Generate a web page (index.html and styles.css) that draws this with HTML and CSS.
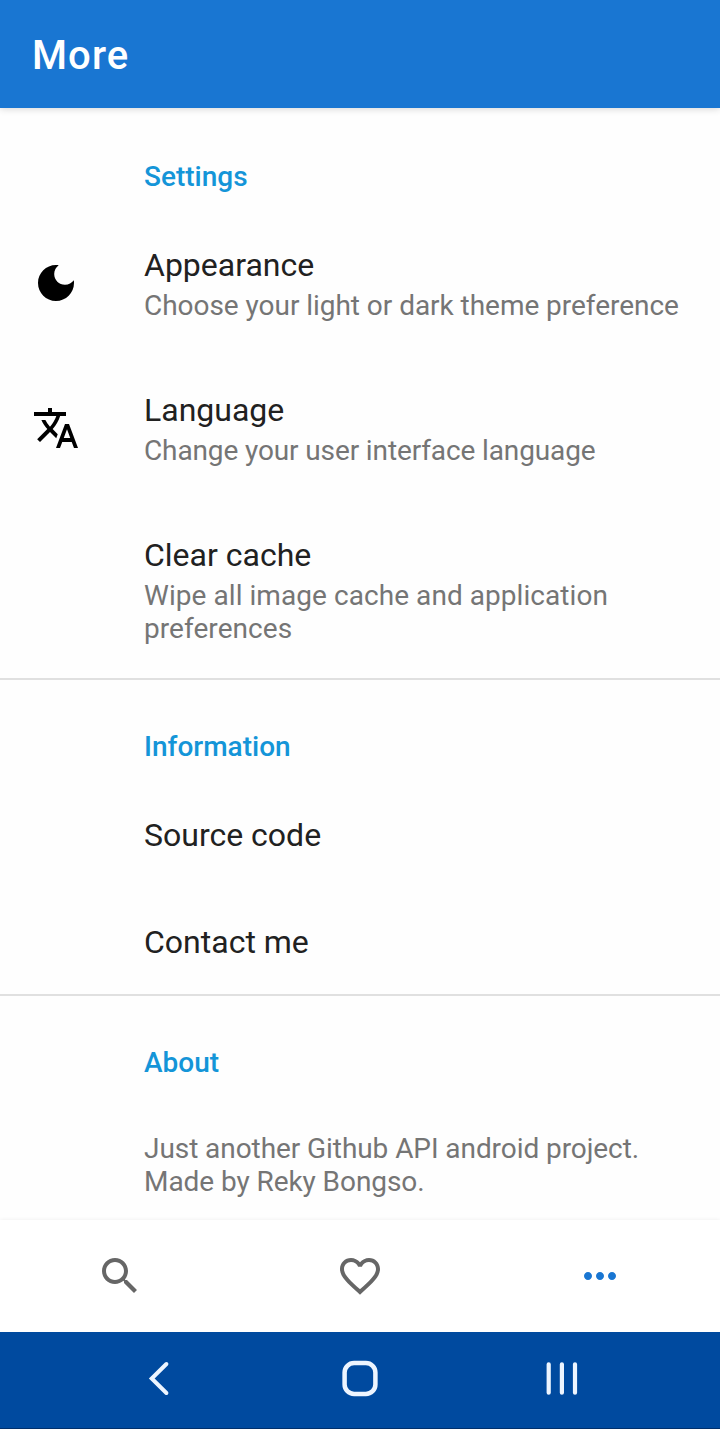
FILE: index.html
```html
<!DOCTYPE html>
<html lang="en">
<head>
<meta charset="utf-8">
<title>More</title>
<link rel="stylesheet" href="styles.css">
</head>
<body>
<div class="screen">
  <header class="app-bar"><h1 class="app-title">More</h1></header>
  <main class="content">
    <section class="group">
      <h2 class="group-title">Settings</h2>
      <div class="item appearance">
        <svg class="item-icon" viewBox="0 0 24 24"><path d="M12 3c-4.97 0-9 4.03-9 9s4.03 9 9 9 9-4.03 9-9c0-.46-.04-.92-.1-1.36-.98 1.37-2.58 2.26-4.4 2.26-2.98 0-5.4-2.42-5.4-5.4 0-1.81.89-3.42 2.26-4.4-.44-.06-.9-.1-1.36-.1z"/></svg>
        <div class="item-text"><div class="item-title">Appearance</div><div class="item-summary">Choose your light or dark theme preference</div></div>
      </div>
      <div class="item language">
        <svg class="item-icon" viewBox="0 0 24 24"><path d="M12.87 15.07l-2.54-2.51.03-.03c1.74-1.94 2.98-4.17 3.71-6.53H17V4h-7V2H8v2H1v1.99h11.17C11.5 7.92 10.44 9.75 9 11.35 8.07 10.32 7.3 9.19 6.69 8h-2c.73 1.63 1.73 3.17 2.98 4.56l-5.09 5.02L4 19l5-5 3.11 3.11.76-2.04zM18.5 10h-2L12 22h2l1.12-3h4.75L21 22h2l-4.5-12zm-2.62 7l1.62-4.33L19.12 17h-3.24z"/></svg>
        <div class="item-text"><div class="item-title">Language</div><div class="item-summary">Change your user interface language</div></div>
      </div>
      <div class="item cache">
        <div class="item-text"><div class="item-title">Clear cache</div><div class="item-summary">Wipe all image cache and application preferences</div></div>
      </div>
    </section>
    <section class="group divided">
      <h2 class="group-title">Information</h2>
      <div class="item"><div class="item-text"><div class="item-title">Source code</div></div></div>
      <div class="item"><div class="item-text"><div class="item-title">Contact me</div></div></div>
    </section>
    <section class="group divided">
      <h2 class="group-title">About</h2>
      <div class="item about"><div class="item-text"><div class="item-summary">Just another Github API android project.<br>Made by Reky Bongso.</div></div></div>
    </section>
  </main>
  <nav class="tabs">
    <svg class="tab" viewBox="0 0 24 24"><path d="M15.5 14h-.79l-.28-.27C15.41 12.59 16 11.11 16 9.5 16 5.91 13.09 3 9.5 3S3 5.91 3 9.5 5.91 16 9.5 16c1.61 0 3.09-.59 4.23-1.57l.27.28v.79l5 4.99L20.49 19l-4.99-5zm-6 0C7.01 14 5 11.99 5 9.5S7.01 5 9.5 5 14 7.01 14 9.5 11.99 14 9.5 14z"/></svg>
    <svg class="tab" viewBox="0 0 24 24"><path d="M16.5 3c-1.74 0-3.41.81-4.5 2.09C10.91 3.81 9.24 3 7.5 3 4.42 3 2 5.42 2 8.5c0 3.78 3.4 6.86 8.55 11.54L12 21.35l1.45-1.32C18.6 15.36 22 12.28 22 8.5 22 5.42 19.58 3 16.5 3zm-4.4 15.55l-.1.1-.1-.1C7.14 14.24 4 11.39 4 8.5 4 6.5 5.5 5 7.5 5c1.54 0 3.04.99 3.57 2.36h1.87C13.46 5.99 14.96 5 16.5 5c2 0 3.5 1.5 3.5 3.5 0 2.89-3.14 5.74-7.9 10.05z"/></svg>
    <svg class="tab active" viewBox="0 0 24 24"><path d="M6 10c-1.1 0-2 .9-2 2s.9 2 2 2 2-.9 2-2-.9-2-2-2zm12 0c-1.1 0-2 .9-2 2s.9 2 2 2 2-.9 2-2-.9-2-2-2zm-6 0c-1.1 0-2 .9-2 2s.9 2 2 2 2-.9 2-2-.9-2-2-2z"/></svg>
  </nav>
  <footer class="system-bar">
    <svg class="system-icon" viewBox="0 0 40 40"><path d="M27.4 6 12.7 20.5 27.4 35" stroke-width="4"/></svg>
    <svg class="system-icon" viewBox="0 0 40 40"><rect x="4.6" y="5.1" width="30.8" height="30.8" rx="9.5" stroke-width="4.5"/></svg>
    <svg class="system-icon" viewBox="0 0 40 40"><path d="M7.7 6.3v28.4M20.9 6.3v28.4M34 6.3v28.4" stroke-width="4.2"/></svg>
  </footer>
</div>
</body>
</html>
```
FILE: styles.css
```css
* { box-sizing: border-box; margin: 0; }
body { background: #fefefe; font-family: Roboto, sans-serif; }
.screen { width: 720px; height: 1429px; display: flex; flex-direction: column; overflow: hidden; }
.app-bar { z-index: 1; height: 108px; flex: none; display: flex; align-items: center; padding: 3px 32px 0; background: #1976d2; box-shadow: 0 1px 7px rgba(0, 0, 0, .16); }
.app-title { font-size: 40px; font-weight: 500; line-height: 48px; letter-spacing: 1.1px; color: #fff; }
.content { flex: 1; min-height: 0; overflow: hidden; }
.group-title { height: 103px; padding: 52px 32px 0 144px; font-size: 28px; font-weight: 500; line-height: 33px; color: #1495d8; }
.divided { margin-top: -1px; }
.divided .group-title { border-top: 2px solid #e0e0e0; padding-top: 50px; }
.item { display: grid; grid-template-columns: 112px 1fr; align-items: center; padding: 35px 32px 34px; }
.item-icon { width: 48px; height: 48px; margin-bottom: 3px; fill: #000; }
.item-text { grid-column: 2; display: grid; row-gap: 5px; }
.item-title { font-size: 32px; line-height: 38px; color: #212121; }
.item-summary { font-size: 28px; line-height: 33px; color: #757575; }
.appearance .item-summary { letter-spacing: -.04px; }
.language .item-summary { letter-spacing: -.12px; }
.cache .item-summary { letter-spacing: .06px; }
.about .item-summary { letter-spacing: -.07px; }
.tabs { height: 112px; flex: none; display: grid; grid-template-columns: repeat(3, 1fr); place-items: center; background: #fff; box-shadow: 0 0 4px rgba(0, 0, 0, .07); }
.tab { width: 48px; height: 48px; fill: #666; }
.tab.active { fill: #1976d2; }
.system-bar { height: 97px; flex: none; display: grid; grid-template-columns: repeat(3, 1fr); place-items: center; padding: 0 58px 4px; background: #004a9f; border-bottom: 1px solid #00306c; }
.system-icon { width: 40px; height: 40px; fill: none; stroke: #edf5ff; stroke-linecap: round; stroke-linejoin: miter; }
```
